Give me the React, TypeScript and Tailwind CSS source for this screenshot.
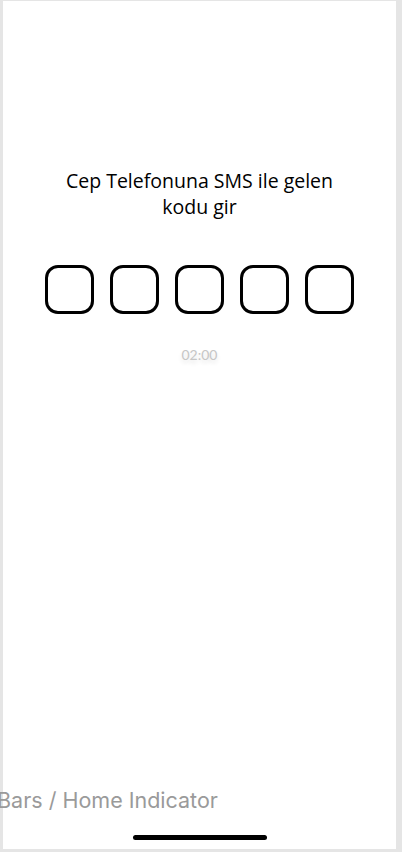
export default function App() {
  return (
    <div className="flex h-[852px] w-[402px] bg-[#e5e5e5] pt-[1px] pr-[6px] pb-[3px] pl-[3px]">
      <div className="flex flex-1 flex-col items-center bg-white">
        <p className="mt-[167px] w-[295px] text-center font-['Open_Sans',sans-serif] text-[19.5px] leading-[26px] font-medium text-black">
          Cep Telefonuna SMS ile gelen kodu gir
        </p>
        <div className="mt-[45px] flex gap-[16px] pr-[1px]">
          {[0, 1, 2, 3, 4].map((i) => (
            <div key={i} className="size-[49px] rounded-[13px] border-[3px] border-black" />
          ))}
        </div>
        <p className="mt-[32px] font-['Lato',sans-serif] text-[14px] leading-[18px] text-[#c6c6c6] [text-shadow:0_3px_4px_rgba(0,0,0,0.12)]">
          02:00
        </p>
        <div className="mt-auto flex w-full flex-col">
          <p className="ml-[-6px] font-['Inter',sans-serif] text-[21.5px] leading-[24px] whitespace-nowrap text-[#9a9a9a]">
            Bars / Home Indicator
          </p>
          <div className="mt-[23px] mb-[9px] h-[5px] w-[134px] self-center rounded-full bg-black" />
        </div>
      </div>
    </div>
  );
}
